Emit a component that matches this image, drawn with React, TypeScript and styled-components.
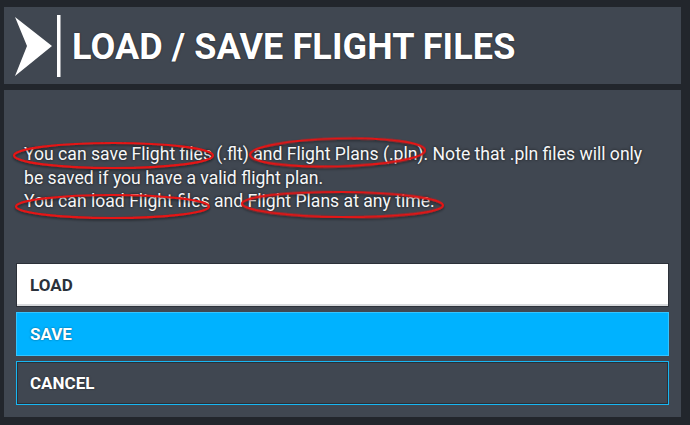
import React from "react";
import styled, { createGlobalStyle } from "styled-components";

const Global = createGlobalStyle`
  html, body { margin: 0; padding: 0; background: #22262c; }
  body { width: 690px; height: 425px; overflow: hidden; font-family: Roboto, "Liberation Sans", sans-serif; }
`;

const Page = styled.div`
  position: relative;
  width: 690px;
  height: 425px;
  padding: 7px 0 0 4px;
  box-sizing: border-box;
  display: flex;
  flex-direction: column;
  gap: 6px;
`;

const Header = styled.header`
  width: 677px;
  height: 77px;
  box-sizing: border-box;
  background: #404751;
  display: flex;
  align-items: center;
  padding-left: 11px;
`;

const Logo = styled.svg`
  display: block;
  flex: none;
`;

const Title = styled.h1`
  margin: 0 0 0 9px;
  font-family: Roboto, "Liberation Sans", sans-serif;
  font-weight: 700;
  font-size: 36px;
  letter-spacing: 0.1px;
  color: #ffffff;
  text-shadow: 0 0 2px rgba(0, 0, 0, 0.6);
  line-height: 1;
  padding-top: 2px;
`;

const Body = styled.section`
  width: 677px;
  height: 327px;
  box-sizing: border-box;
  background: #404751;
  padding: 53px 12px 12px;
  display: flex;
  flex-direction: column;
`;

const Message = styled.p`
  margin: 0 0 0 8px;
  font-family: Roboto, "Liberation Sans", sans-serif;
  font-size: 17.6px;
  line-height: 23.5px;
  color: #f6f7f8;
  text-shadow: 0 0 3px rgba(0, 0, 0, 0.75);
`;

const Buttons = styled.div`
  margin-top: auto;
  display: flex;
  flex-direction: column;
  gap: 5px;
`;

type Variant = "light" | "primary" | "outline";

const Button = styled.button<{ $variant: Variant }>`
  height: 44px;
  box-sizing: border-box;
  display: flex;
  align-items: center;
  padding: 0 0 0 13px;
  font-family: Roboto, "Liberation Sans", sans-serif;
  font-weight: 700;
  font-size: 17px;
  text-align: left;
  cursor: pointer;
  border: 1px solid
    ${(p) =>
      p.$variant === "light" ? "#2c3139" : p.$variant === "primary" ? "#33c4ff" : "#18b6f2"};
  background: ${(p) =>
    p.$variant === "light" ? "#ffffff" : p.$variant === "primary" ? "#00b2ff" : "#404751"};
  color: ${(p) => (p.$variant === "light" ? "#2a313b" : "#ffffff")};
  text-shadow: ${(p) => (p.$variant === "light" ? "none" : "0 0 2px rgba(0,0,0,0.55)")};
  box-shadow: ${(p) =>
    p.$variant === "outline" ? "inset 0 0 0 1px #2a2f36" : p.$variant === "light" ? "inset 0 -2px 0 #d8dadd" : "none"};
`;

const Annotations = styled.svg`
  position: absolute;
  left: 0;
  top: 0;
  pointer-events: none;
`;

export default function App() {
  const rings = [
    { cx: 113.5, cy: 155.5, rx: 99.5, ry: 12.5, rot: 0 },
    { cx: 337.5, cy: 152.5, rx: 87.5, ry: 14, rot: -1.5 },
    { cx: 112.5, cy: 206.5, rx: 96.5, ry: 11.5, rot: 0 },
    { cx: 342.5, cy: 204.5, rx: 100.5, ry: 12.5, rot: 0.5 },
  ];
  return (
    <>
      <Global />
      <Page>
        <Header>
          <Logo width="48" height="62" viewBox="0 0 48 62">
            <polygon points="0,2 37,31 0,61 12,31" fill="#ffffff" />
            <rect x="42" y="0" width="3.5" height="62" fill="#ffffff" />
          </Logo>
          <Title>LOAD / SAVE FLIGHT FILES</Title>
        </Header>
        <Body>
          <Message>
            You can save Flight files (.flt) and Flight Plans (.pln). Note that .pln files will only
            <br />
            be saved if you have a valid flight plan.
            <br />
            You can load Flight files and Flight Plans at any time.
          </Message>
          <Buttons>
            <Button $variant="light">LOAD</Button>
            <Button $variant="primary">SAVE</Button>
            <Button $variant="outline">CANCEL</Button>
          </Buttons>
        </Body>
        <Annotations width="690" height="425" viewBox="0 0 690 425">
          <defs>
            <filter id="sh" x="-10%" y="-50%" width="120%" height="200%">
              <feDropShadow dx="0" dy="1.5" stdDeviation="1.2" floodColor="#000" floodOpacity="0.45" />
            </filter>
          </defs>
          {rings.map((r, i) => (
            <ellipse
              key={i}
              cx={r.cx}
              cy={r.cy}
              rx={r.rx}
              ry={r.ry}
              transform={`rotate(${r.rot} ${r.cx} ${r.cy})`}
              fill="none"
              stroke="#e41414"
              strokeWidth="2.2"
              filter="url(#sh)"
            />
          ))}
        </Annotations>
      </Page>
    </>
  );
}
